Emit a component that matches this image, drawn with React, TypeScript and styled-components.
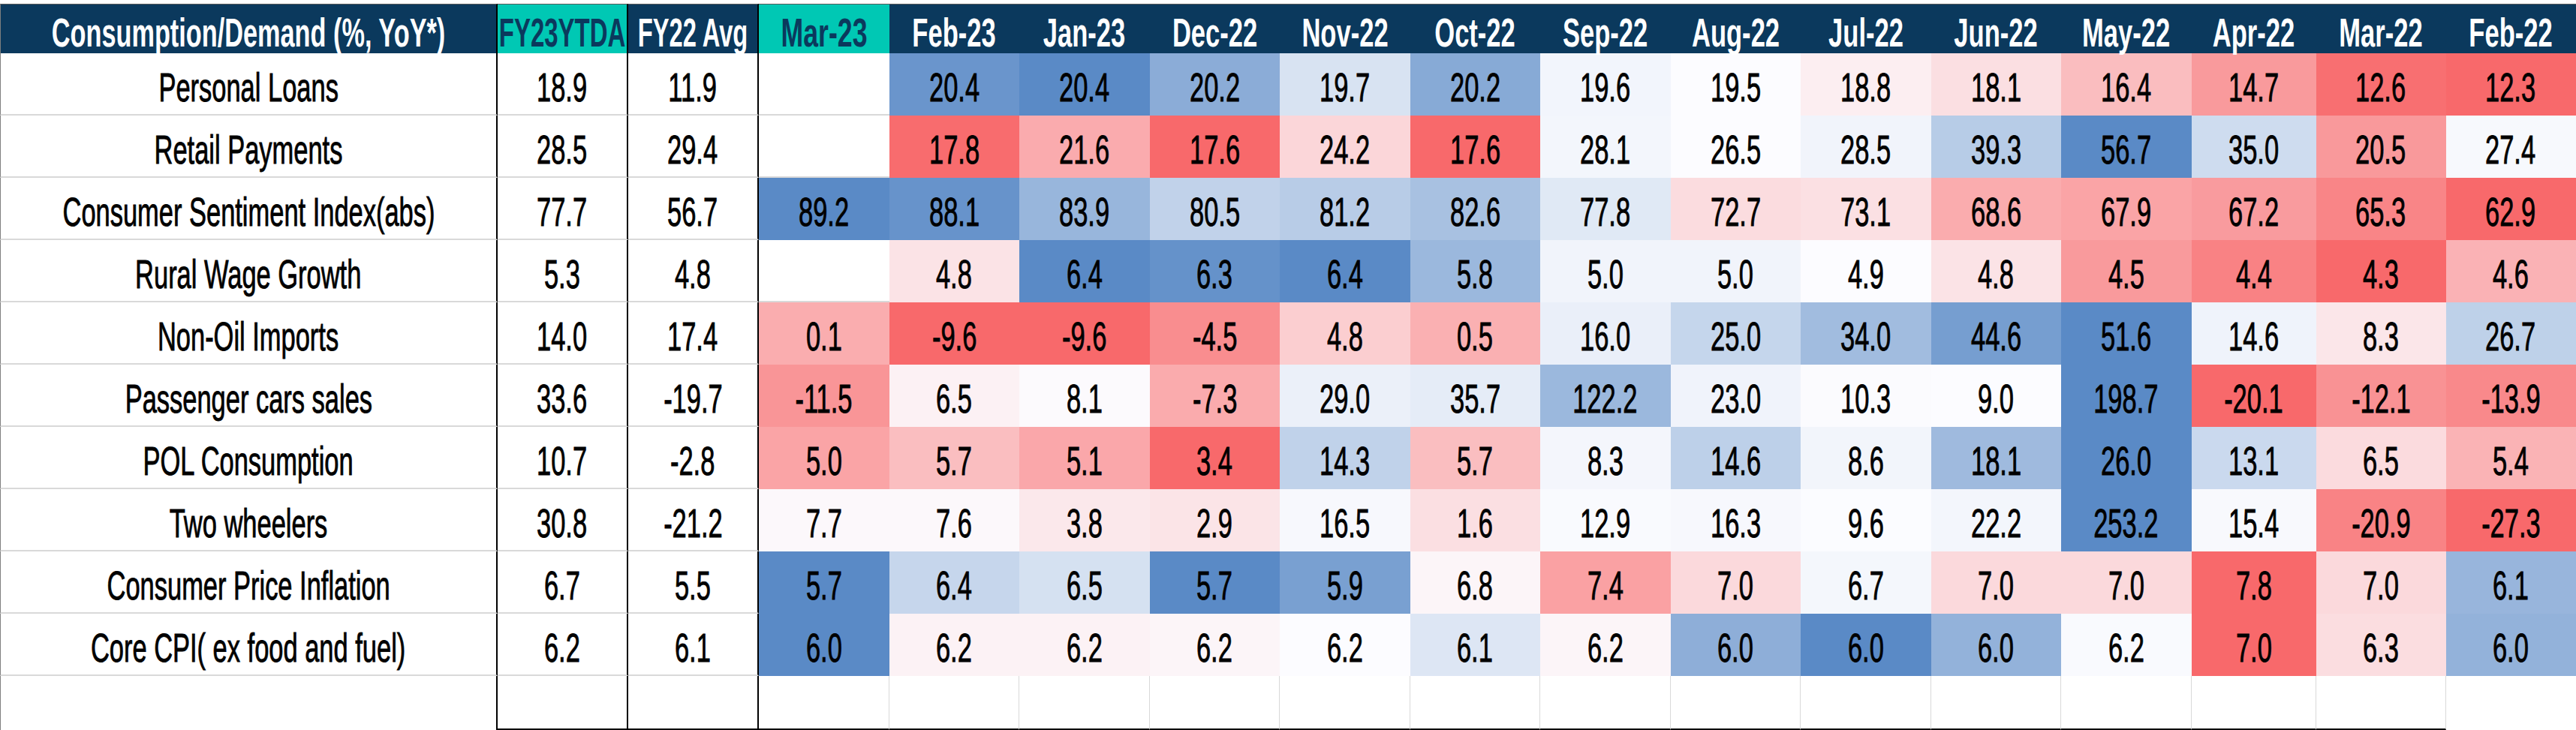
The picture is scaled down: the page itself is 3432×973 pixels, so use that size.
import React from "react";
import styled, { createGlobalStyle } from "styled-components";

const GlobalStyle = createGlobalStyle`
  html, body {
    margin: 0;
    padding: 0;
    background: #ffffff;
    overflow: hidden;
  }
  body {
    font-family: "Liberation Sans", Arial, sans-serif;
  }
  * { box-sizing: border-box; }
`;

const NAVY = "#0b395d";
const TEAL = "#00c8b4";
const GRID = "#d9d9d9";

const WHITE = [252, 252, 255];
const BLUE = [90, 138, 198];
const RED = [248, 105, 107];

type RowData = {
  label: string;
  ytd: string;
  avg: string;
  values: (number | null)[];
  reversed?: boolean;
  overrides?: Record<number, number>;
};

const MONTHS = [
  "Mar-23", "Feb-23", "Jan-23", "Dec-22", "Nov-22", "Oct-22", "Sep-22",
  "Aug-22", "Jul-22", "Jun-22", "May-22", "Apr-22", "Mar-22", "Feb-22",
];

const ROWS: RowData[] = [
  {
    label: "Personal Loans", ytd: "18.9", avg: "11.9",
    values: [null, 20.4, 20.4, 20.2, 19.7, 20.2, 19.6, 19.5, 18.8, 18.1, 16.4, 14.7, 12.6, 12.3],
    overrides: { 1: 0.9, 3: 0.7, 5: 0.72, 6: 0.06 },
  },
  {
    label: "Retail Payments", ytd: "28.5", avg: "29.4",
    values: [null, 17.8, 21.6, 17.6, 24.2, 17.6, 28.1, 26.5, 28.5, 39.3, 56.7, 35.0, 20.5, 27.4],
  },
  {
    label: "Consumer Sentiment Index(abs)", ytd: "77.7", avg: "56.7",
    values: [89.2, 88.1, 83.9, 80.5, 81.2, 82.6, 77.8, 72.7, 73.1, 68.6, 67.9, 67.2, 65.3, 62.9],
  },
  {
    label: "Rural Wage Growth", ytd: "5.3", avg: "4.8",
    values: [null, 4.8, 6.4, 6.3, 6.4, 5.8, 5.0, 5.0, 4.9, 4.8, 4.5, 4.4, 4.3, 4.6],
  },
  {
    label: "Non-Oil Imports", ytd: "14.0", avg: "17.4",
    values: [0.1, -9.6, -9.6, -4.5, 4.8, 0.5, 16.0, 25.0, 34.0, 44.6, 51.6, 14.6, 8.3, 26.7],
  },
  {
    label: "Passenger cars sales", ytd: "33.6", avg: "-19.7",
    values: [-11.5, 6.5, 8.1, -7.3, 29.0, 35.7, 122.2, 23.0, 10.3, 9.0, 198.7, -20.1, -12.1, -13.9],
  },
  {
    label: "POL Consumption", ytd: "10.7", avg: "-2.8",
    values: [5.0, 5.7, 5.1, 3.4, 14.3, 5.7, 8.3, 14.6, 8.6, 18.1, 26.0, 13.1, 6.5, 5.4],
  },
  {
    label: "Two wheelers", ytd: "30.8", avg: "-21.2",
    values: [7.7, 7.6, 3.8, 2.9, 16.5, 1.6, 12.9, 16.3, 9.6, 22.2, 253.2, 15.4, -20.9, -27.3],
  },
  {
    label: "Consumer Price Inflation", ytd: "6.7", avg: "5.5",
    values: [5.7, 6.4, 6.5, 5.7, 5.9, 6.8, 7.4, 7.0, 6.7, 7.0, 7.0, 7.8, 7.0, 6.1],
    reversed: true,
  },
  {
    label: "Core CPI( ex food and fuel)", ytd: "6.2", avg: "6.1",
    values: [6.0, 6.2, 6.2, 6.2, 6.2, 6.1, 6.2, 6.0, 6.0, 6.0, 6.2, 7.0, 6.3, 6.0],
    reversed: true,
    overrides: {
      0: 1, 1: -0.07, 2: -0.07, 3: -0.05, 4: 0, 5: 0.19, 6: -0.05,
      7: 0.68, 8: 1, 9: 0.65, 10: 0.02, 11: -1, 12: -0.21, 13: 0.65,
    },
  },
];

function median(nums: number[]): number {
  const s = [...nums].sort((a, b) => a - b);
  const n = s.length;
  return n % 2 ? s[(n - 1) / 2] : (s[n / 2 - 1] + s[n / 2]) / 2;
}

function intensities(row: RowData): (number | null)[] {
  const nums = row.values.filter((v): v is number => v !== null);
  const min = Math.min(...nums);
  const max = Math.max(...nums);
  const mid = median(nums);
  return row.values.map((v, i) => {
    if (v === null) return null;
    if (row.overrides && row.overrides[i] !== undefined) return row.overrides[i];
    let t = 0;
    if (v >= mid) t = max > mid ? (v - mid) / (max - mid) : 0;
    else t = mid > min ? -(mid - v) / (mid - min) : 0;
    return row.reversed ? -t : t;
  });
}

function heatColor(t: number): string {
  const target = t >= 0 ? BLUE : RED;
  const k = Math.min(1, Math.abs(t));
  const c = WHITE.map((w, i) => Math.round(w + (target[i] - w) * k));
  return `rgb(${c[0]}, ${c[1]}, ${c[2]})`;
}

const Page = styled.div`
  width: 3432px;
  height: 973px;
  padding-top: 5px;
  background: #ffffff;
`;

const Table = styled.div`
  display: grid;
  grid-template-columns: 663px 174px 174px repeat(11, 173.5px) 166px 173px 173px;
  grid-template-rows: 66px repeat(10, 83px) 72px;
  width: 3432px;
`;

const Row = styled.div`
  display: contents;
`;

const HeadCell = styled.div<{ $accent?: boolean; $divider?: boolean; $first?: boolean }>`
  display: flex;
  align-items: center;
  justify-content: center;
  padding-top: 9px;
  white-space: nowrap;
  background: ${(p) => (p.$accent ? TEAL : NAVY)};
  color: ${(p) => (p.$accent ? NAVY : "#ffffff")};
  border-top: 1px solid #5a5a5a;
  border-left: ${(p) => (p.$first ? "1px solid #7f7f7f" : "none")};
  border-right: ${(p) => (p.$divider ? "2px solid #000000" : "none")};
  font-size: 54px;
  font-weight: 700;
  line-height: 1;
`;

const HeadText = styled.span<{ $scale?: number }>`
  display: inline-block;
  flex: none;
  transform: scaleX(${(p) => p.$scale ?? 0.635});
`;

const BodyCell = styled.div`
  display: flex;
  align-items: center;
  justify-content: center;
  padding-top: 10px;
  white-space: nowrap;
  color: #000000;
  font-size: 53px;
  line-height: 1;
  background: #ffffff;
  border-bottom: 2px solid ${GRID};
`;

const LabelCell = styled(BodyCell)`
  border-left: 1px solid #7f7f7f;
  border-right: 2px solid #000000;
`;

const StatCell = styled(BodyCell)`
  border-right: 2px solid #000000;
`;

const HeatCell = styled(BodyCell)<{ $filled: boolean }>`
  border-bottom-color: ${(p) => (p.$filled ? "transparent" : GRID)};
`;

const CellText = styled.span`
  display: inline-block;
  flex: none;
  transform: scaleX(0.65);
  -webkit-text-stroke: 0.9px #000000;
`;

const FootCell = styled.div<{ $kind: "label" | "stat" | "month" | "last" }>`
  background: #ffffff;
  border-left: ${(p) => (p.$kind === "label" ? "1px solid #7f7f7f" : "none")};
  border-right: ${(p) =>
    p.$kind === "label" || p.$kind === "stat"
      ? "2px solid #000000"
      : p.$kind === "month"
      ? `1px solid ${GRID}`
      : "none"};
  border-bottom: ${(p) =>
    p.$kind === "stat" || p.$kind === "month" ? "2px solid #000000" : "none"};
`;

export default function App() {
  return (
    <Page>
      <GlobalStyle />
      <Table>
        <Row>
          <HeadCell $first $divider>
            <HeadText>Consumption/Demand (%, YoY*)</HeadText>
          </HeadCell>
          <HeadCell $accent $divider>
            <HeadText $scale={0.61}>FY23YTDA</HeadText>
          </HeadCell>
          <HeadCell $divider>
            <HeadText $scale={0.605}>FY22 Avg</HeadText>
          </HeadCell>
          {MONTHS.map((m, i) => (
            <HeadCell key={m} $accent={i === 0}>
              <HeadText $scale={i === 0 ? 0.66 : 0.64}>{m}</HeadText>
            </HeadCell>
          ))}
        </Row>
        {ROWS.map((row) => {
          const ts = intensities(row);
          return (
            <Row key={row.label}>
              <LabelCell>
                <CellText>{row.label}</CellText>
              </LabelCell>
              <StatCell>
                <CellText>{row.ytd}</CellText>
              </StatCell>
              <StatCell>
                <CellText>{row.avg}</CellText>
              </StatCell>
              {row.values.map((v, i) => {
                const t = ts[i];
                return (
                  <HeatCell
                    key={MONTHS[i]}
                    $filled={t !== null}
                    style={t !== null ? { background: heatColor(t) } : undefined}
                  >
                    {v !== null && <CellText>{v.toFixed(1)}</CellText>}
                  </HeatCell>
                );
              })}
            </Row>
          );
        })}
        <Row>
          <FootCell $kind="label" />
          <FootCell $kind="stat" />
          <FootCell $kind="stat" />
          {MONTHS.map((m, i) => (
            <FootCell key={m} $kind={i === MONTHS.length - 1 ? "last" : "month"} />
          ))}
        </Row>
      </Table>
    </Page>
  );
}
